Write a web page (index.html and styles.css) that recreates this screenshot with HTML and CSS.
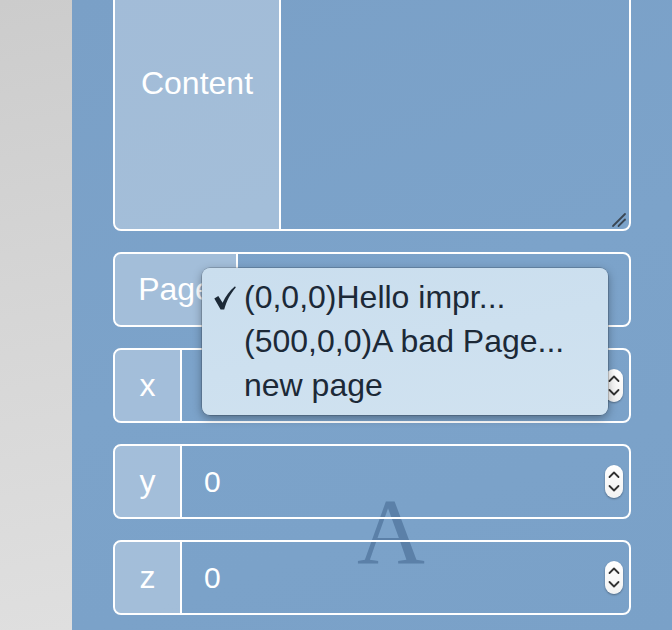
FILE: index.html
```html
<!DOCTYPE html>
<html>
<head>
<meta charset="utf-8">
<link rel="stylesheet" href="styles.css">
</head>
<body>
<div class="app">
  <aside class="sidebar"></aside>
  <main class="panel">
    <div class="watermark">A</div>
    <div class="form">
      <div class="group group-content">
        <div class="label label-content">Content</div>
        <div class="field textarea">
          <svg class="grip" width="16" height="16" viewBox="0 0 16 16">
            <line x1="2" y1="14" x2="14" y2="2" stroke="#3a4653" stroke-width="1.8" stroke-linecap="round"/>
            <line x1="7.5" y1="14" x2="14" y2="7.5" stroke="#3a4653" stroke-width="1.8" stroke-linecap="round"/>
          </svg>
        </div>
      </div>
      <div class="group row">
        <div class="label label-page">Page</div>
        <div class="field"></div>
      </div>
      <div class="group row">
        <div class="label label-axis">x</div>
        <div class="field number"><span class="value"></span><span class="spin"><svg width="18" height="33" viewBox="0 0 18 33"><polyline points="4.5,12 9,7.5 13.5,12" fill="none" stroke="#333" stroke-width="1.8" stroke-linecap="round" stroke-linejoin="round"/><polyline points="4.5,21 9,25.5 13.5,21" fill="none" stroke="#333" stroke-width="1.8" stroke-linecap="round" stroke-linejoin="round"/></svg></span></div>
      </div>
      <div class="group row">
        <div class="label label-axis">y</div>
        <div class="field number"><span class="value">0</span><span class="spin"><svg width="18" height="33" viewBox="0 0 18 33"><polyline points="4.5,12 9,7.5 13.5,12" fill="none" stroke="#333" stroke-width="1.8" stroke-linecap="round" stroke-linejoin="round"/><polyline points="4.5,21 9,25.5 13.5,21" fill="none" stroke="#333" stroke-width="1.8" stroke-linecap="round" stroke-linejoin="round"/></svg></span></div>
      </div>
      <div class="group row">
        <div class="label label-axis">z</div>
        <div class="field number"><span class="value">0</span><span class="spin"><svg width="18" height="33" viewBox="0 0 18 33"><polyline points="4.5,12 9,7.5 13.5,12" fill="none" stroke="#333" stroke-width="1.8" stroke-linecap="round" stroke-linejoin="round"/><polyline points="4.5,21 9,25.5 13.5,21" fill="none" stroke="#333" stroke-width="1.8" stroke-linecap="round" stroke-linejoin="round"/></svg></span></div>
      </div>
    </div>
    <ul class="menu">
      <li class="item"><span class="check"><svg width="22" height="24" viewBox="0 0 22 24"><path d="M0.3,12.5 L4.3,10 L8.6,16.8 C11.6,10.5 15.6,4.6 21,0.3 L21.8,1.4 C16.6,7.5 12.8,14 10.2,23.5 L6.6,23.5 Z" fill="#1c2937"/></svg></span><span>(0,0,0)Hello impr...</span></li>
      <li class="item"><span class="check"></span><span>(500,0,0)A bad Page...</span></li>
      <li class="item"><span class="check"></span><span>new page</span></li>
    </ul>
  </main>
</div>
</body>
</html>
```

FILE: styles.css
```css
html, body {
  margin: 0;
  padding: 0;
  height: 100%;
  overflow: hidden;
}
body {
  font-family: "Liberation Sans", Arial, sans-serif;
}
.app {
  display: flex;
  height: 630px;
}
.sidebar {
  width: 72px;
  flex: none;
  background: linear-gradient(170deg, #cccccc 0%, #d6d6d6 50%, #dfdfdf 100%);
}
.panel {
  flex: 1;
  position: relative;
  padding: 0 41px;
  background: linear-gradient(160deg, #7aa0c7 0%, #7ca3ca 50%, #7aa1c8 100%);
  overflow: hidden;
}
.watermark {
  position: absolute;
  left: 285px;
  top: 484px;
  font-family: "Liberation Serif", "Times New Roman", serif;
  font-size: 94px;
  line-height: 1;
  color: #5b80a8;
  z-index: 0;
}
.form {
  position: relative;
  z-index: 1;
  display: flex;
  flex-direction: column;
  gap: 21px;
}
.group {
  display: flex;
  border: 2px solid #ffffff;
  border-radius: 8px;
  box-sizing: border-box;
  overflow: hidden;
}
.group-content {
  height: 296px;
  margin-top: -65px;
}
.row {
  height: 75px;
}
.label {
  flex: none;
  display: flex;
  align-items: center;
  justify-content: center;
  background: rgba(255, 255, 255, 0.3);
  border-right: 2px solid #ffffff;
  color: #ffffff;
  font-size: 32px;
}
.label-content {
  width: 164px;
}
.label-page {
  width: 121px;
}
.label-axis {
  width: 65px;
}
.field {
  flex: 1;
  position: relative;
  display: flex;
  align-items: center;
}
.grip {
  position: absolute;
  right: 2px;
  bottom: 1px;
}
.number {
  justify-content: space-between;
  padding: 0 6px 0 22px;
}
.value {
  color: #ffffff;
  font-size: 30px;
}
.spin {
  display: block;
  width: 18px;
  height: 33px;
  border-radius: 9px;
  background: linear-gradient(#ffffff, #f2f2f2);
  box-shadow: 0 1px 2px rgba(0, 0, 0, 0.35);
}
.spin svg {
  display: block;
}
.menu {
  position: absolute;
  z-index: 2;
  left: 130px;
  top: 268px;
  width: 406px;
  box-sizing: border-box;
  margin: 0;
  padding: 7px 0 8px 12px;
  list-style: none;
  background: linear-gradient(170deg, #cadeee 0%, #d0e2f0 100%);
  border-radius: 8px;
  box-shadow: 0 3px 10px rgba(0, 0, 0, 0.35), 0 0 0 0.5px rgba(0, 0, 0, 0.3);
  color: #1c2937;
  font-size: 32px;
}
.item {
  display: flex;
  height: 44px;
  line-height: 44px;
  white-space: nowrap;
}
.check {
  width: 30px;
  flex: none;
  display: flex;
  align-items: center;
  padding-top: 2px;
  box-sizing: border-box;
}
.check svg {
  display: block;
}
```
